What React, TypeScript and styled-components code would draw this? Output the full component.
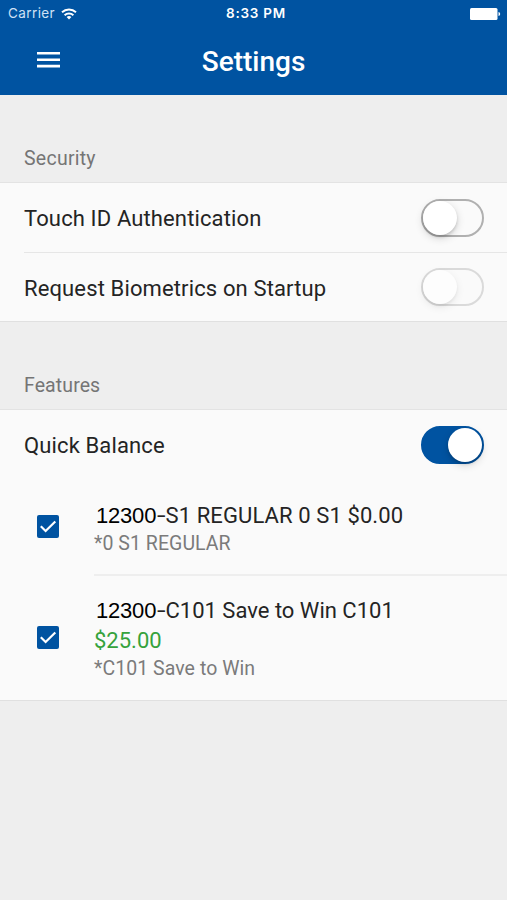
import React from "react";
import styled, { createGlobalStyle } from "styled-components";

const BLUE = "#0053a1";

const GlobalStyle = createGlobalStyle`
  * { box-sizing: border-box; }
  body { margin: 0; background: #eeeeee; font-family: Roboto, sans-serif; }
`;

const Screen = styled.div`
  width: 507px;
  height: 900px;
  overflow: hidden;
  background: #eeeeee;
  color: #242424;
`;

const Header = styled.header`
  height: 95px;
  background: ${BLUE};
  color: #fff;
`;

const StatusBar = styled.div`
  height: 27px;
  display: grid;
  grid-template-columns: 1fr auto 1fr;
  align-items: center;
  padding: 0 6px 0 8px;
  font: 13.5px/27px Inter, sans-serif;
`;

const Carrier = styled.div`
  display: flex;
  align-items: center;
  gap: 6px;
  color: #cfe1f5;
  letter-spacing: 0.4px;
`;

const Clock = styled.div`
  font-size: 13.5px;
  font-weight: 600;
  letter-spacing: 0.75px;
  padding-left: 3px;
`;

const Battery = styled.svg`
  justify-self: end;
`;

const NavBar = styled.div`
  height: 68px;
  display: grid;
  grid-template-columns: 97px 1fr 97px;
  align-items: center;
  justify-items: center;
`;

const MenuIcon = styled.svg`
  margin-bottom: 2px;
`;

const Title = styled.h1`
  margin: 0;
  padding-top: 2px;
  font-size: 28px;
  line-height: 66px;
  font-weight: 500;
`;

const SectionTitle = styled.h2<{ $spacing: number }>`
  margin: 0;
  height: 87px;
  padding: 46px 24px 0;
  font-size: 19.5px;
  line-height: 36px;
  font-weight: 400;
  letter-spacing: ${(p) => p.$spacing}px;
  color: #757575;
`;

const Panel = styled.section`
  background: #fafafa;
  border-top: 1px solid #e3e3e3;
  border-bottom: 1px solid #e0e0e0;
`;

const SettingRow = styled.div<{ $height: number; $divided?: boolean }>`
  height: ${(p) => p.$height}px;
  margin-left: 24px;
  padding-right: 23px;
  display: flex;
  align-items: center;
  justify-content: space-between;
  border-bottom: ${(p) => (p.$divided ? "1px solid #e6e6e6" : "0")};
  font-size: 22px;
`;

const Label = styled.span`
  letter-spacing: 0.13px;
  padding-top: 2px;
`;

const trackBorder = (on?: boolean, disabled?: boolean) =>
  on ? BLUE : disabled ? "#dadada" : "#b0b0b0";

const Track = styled.span<{ $on?: boolean; $disabled?: boolean }>`
  width: 63px;
  height: 38px;
  display: flex;
  align-items: center;
  justify-content: ${(p) => (p.$on ? "flex-end" : "flex-start")};
  border-radius: 19px;
  border: 2px solid ${(p) => trackBorder(p.$on, p.$disabled)};
  background: ${(p) => (p.$on ? BLUE : "#fafafa")};
`;

const Knob = styled.span<{ $disabled?: boolean }>`
  width: 34px;
  height: 34px;
  flex: none;
  border-radius: 50%;
  background: ${(p) => (p.$disabled ? "#fdfdfd" : "#fff")};
  box-shadow: ${(p) =>
    p.$disabled
      ? "0 3px 8px rgba(0, 0, 0, 0.08), 0 2px 3px rgba(0, 0, 0, 0.05)"
      : "0 3px 9px rgba(0, 0, 0, 0.16), 0 2px 3px rgba(0, 0, 0, 0.14)"};
`;

const Account = styled.div<{ $height: number }>`
  height: ${(p) => p.$height}px;
  display: grid;
  grid-template-columns: 94px 1fr;
`;

const CheckCell = styled.div<{ $top: number }>`
  padding: ${(p) => p.$top}px 0 0 37px;
`;

const AccountText = styled.div<{ $divided?: boolean; $top: number }>`
  padding-top: ${(p) => p.$top}px;
  border-bottom: ${(p) => (p.$divided ? "2px solid #eeeeee" : "0")};
`;

const AccountName = styled.div<{ $spacing: number }>`
  font-size: 22px;
  line-height: 30px;
  letter-spacing: ${(p) => p.$spacing}px;
`;

const AccountNumber = styled.span`
  display: inline-block;
  width: 63px;
  padding-left: 2px;
  font: 22px "Liberation Sans", Arial, sans-serif;
  letter-spacing: -0.2px;
  color: #000;
`;

const Dash = styled.span`
  display: inline-block;
  width: 8.5px;
  transform: scaleX(1.4);
  transform-origin: left;
`;

const Amount = styled.div`
  font-size: 22px;
  line-height: 30px;
  color: #35a23c;
`;

const Nickname = styled.div`
  font-size: 19.5px;
  line-height: 26px;
  letter-spacing: 0.05px;
  color: #7b7b7b;
`;

const CheckSvg = styled.svg`
  display: block;
`;

function Toggle({ on, disabled }: { on?: boolean; disabled?: boolean }) {
  return (
    <Track $on={on} $disabled={disabled} role="switch" aria-checked={!!on}>
      <Knob $disabled={disabled} />
    </Track>
  );
}

function Check() {
  return (
    <CheckSvg width="22" height="23" viewBox="0 0 22 23">
      <rect width="22" height="23" rx="2" fill={BLUE} />
      <path d="M3.8 11.3l4.8 4.7L18.3 6.5" fill="none" stroke="#fff" strokeWidth="2.2" />
    </CheckSvg>
  );
}

function Wifi() {
  return (
    <svg width="16" height="12" viewBox="0 0 16 12" fill="none" stroke="#fff" strokeWidth="1.9">
      <path d="M1 4.3a10.2 10.2 0 0 1 14 0M3.6 7.2a6.4 6.4 0 0 1 8.8 0" />
      <path d="M8 11.6L5.6 9.1a3.5 3.5 0 0 1 4.8 0z" fill="#fff" stroke="none" />
    </svg>
  );
}

export default function App() {
  return (
    <Screen>
      <GlobalStyle />
      <Header>
        <StatusBar>
          <Carrier>
            <span>Carrier</span>
            <Wifi />
          </Carrier>
          <Clock>8:33 PM</Clock>
          <Battery width="31" height="12" viewBox="0 0 31 12" fill="#fff">
            <rect width="27.5" height="12" rx="1.5" />
            <path d="M28.5 4c2.2.5 2.2 3.5 0 4z" />
          </Battery>
        </StatusBar>
        <NavBar>
          <MenuIcon width="23" height="16" viewBox="0 0 23 16" fill="#fff">
            <path d="M0 0h23v2.6H0zM0 6.4h23V9H0zM0 12.8h23v2.6H0z" />
          </MenuIcon>
          <Title>Settings</Title>
        </NavBar>
      </Header>
      <SectionTitle $spacing={0.25}>Security</SectionTitle>
      <Panel>
        <SettingRow $height={70} $divided>
          <Label>Touch ID Authentication</Label>
          <Toggle />
        </SettingRow>
        <SettingRow $height={68}>
          <Label>Request Biometrics on Startup</Label>
          <Toggle disabled />
        </SettingRow>
      </Panel>
      <SectionTitle $spacing={0.1}>Features</SectionTitle>
      <Panel>
        <SettingRow $height={69}>
          <Label>Quick Balance</Label>
          <Toggle on />
        </SettingRow>
        <Account $height={97}>
          <CheckCell $top={36}>
            <Check />
          </CheckCell>
          <AccountText $top={22} $divided>
            <AccountName $spacing={0.1}>
              <AccountNumber>12300</AccountNumber>
              <Dash>-</Dash>S1 REGULAR 0 S1 $0.00
            </AccountName>
            <Nickname>*0 S1 REGULAR</Nickname>
          </AccountText>
        </Account>
        <Account $height={124}>
          <CheckCell $top={50}>
            <Check />
          </CheckCell>
          <AccountText $top={20}>
            <AccountName $spacing={0}>
              <AccountNumber>12300</AccountNumber>
              <Dash>-</Dash>C101 Save to Win C101
            </AccountName>
            <Amount>$25.00</Amount>
            <Nickname>*C101 Save to Win</Nickname>
          </AccountText>
        </Account>
      </Panel>
    </Screen>
  );
}
